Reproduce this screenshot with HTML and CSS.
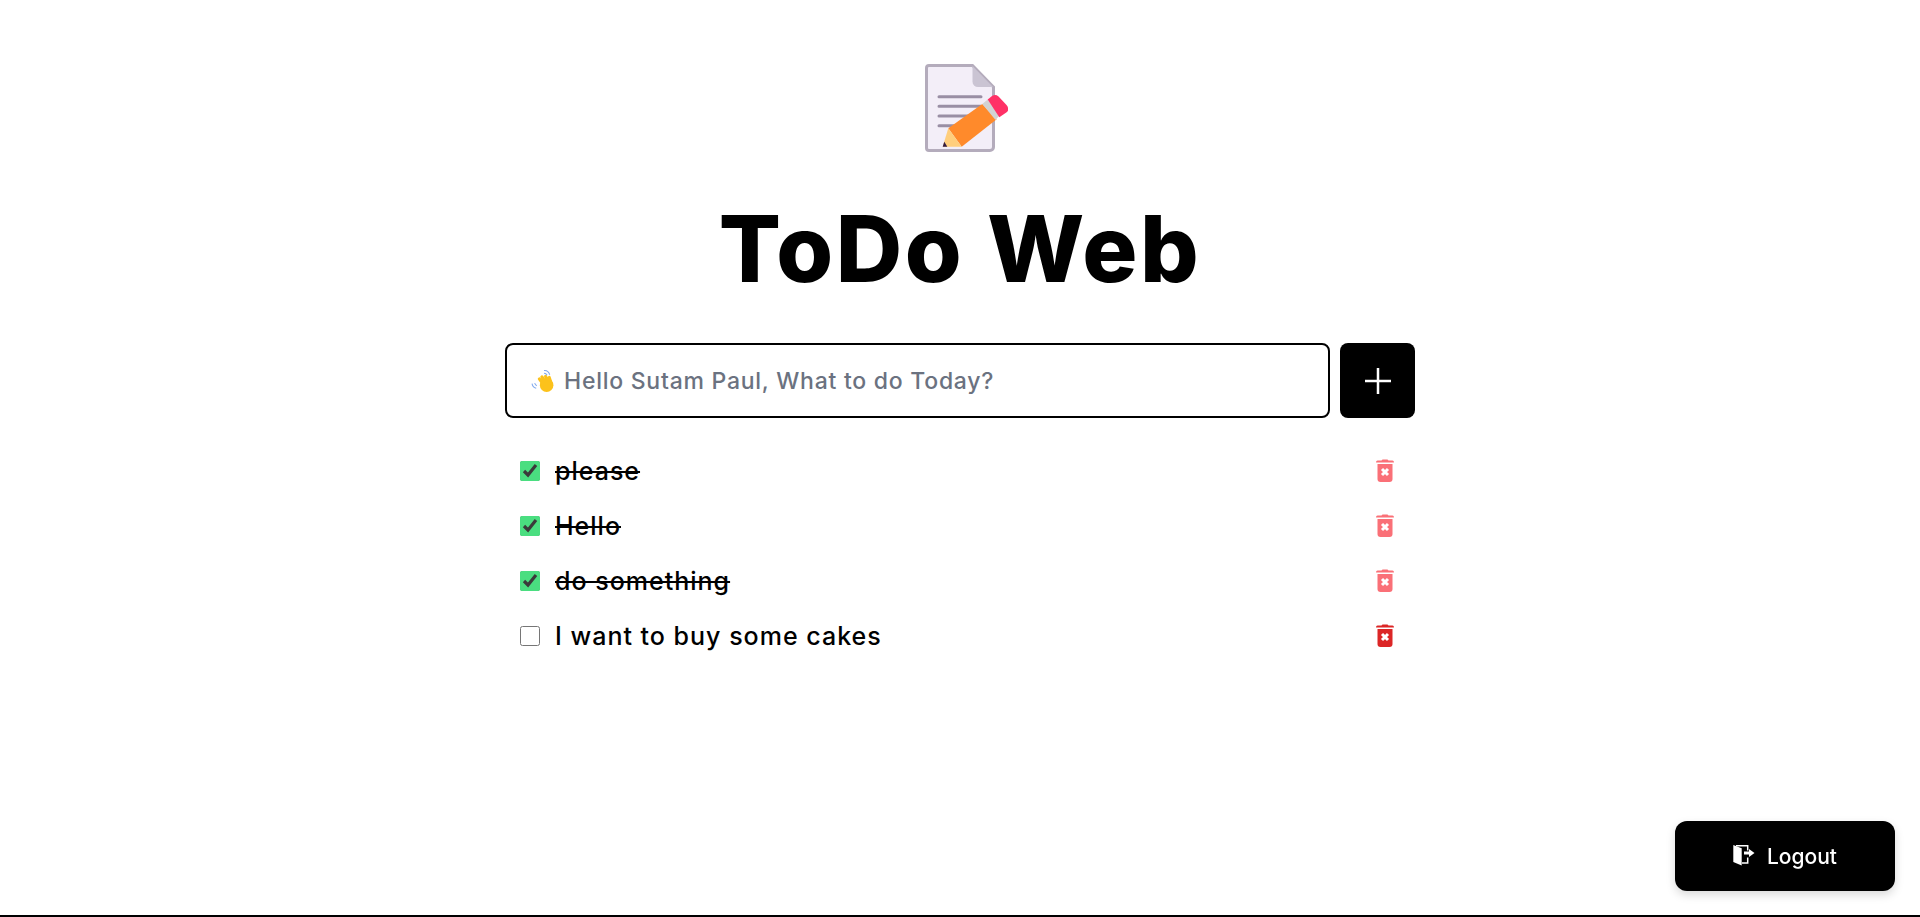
FILE: index.html
```html
<!DOCTYPE html>
<html lang="en">
<head>
  <meta charset="UTF-8">
  <meta name="viewport" content="width=device-width, initial-scale=1.0">
  <title>ToDo Web</title>
  <link rel="stylesheet" href="styles.css">
</head>
<body>
  <main class="page">
    <svg class="logo" viewBox="0 0 96 96" aria-hidden="true">
      <path d="M17 5.500H60.500L81.500 27V87A3.500 3.500 0 0 1 78 90.500H17A2.500 2.500 0 0 1 14.500 88V8A2.500 2.500 0 0 1 17 5.500Z" fill="#f3eef8" stroke="#b4acbc" stroke-width="3"/>
      <path d="M60.500 6L81 27H66A5.500 5.500 0 0 1 60.500 21.500Z" fill="#cac4d3"/>
      <path d="M27 36.700H69M27 46.300H69M27 56H62M27 65.700H45" stroke="#998ea4" stroke-width="3" stroke-linecap="round" fill="none"/>
      <path d="M36.300 68.300L70.300 44L84.700 59.300L49.700 86.700Z" fill="#ff8a2b"/>
      <path d="M36.300 68.300L49.700 86.700H30.700Z" fill="#ffce7c"/>
      <path d="M30.700 86.700H35.300L32.300 81.700Z" fill="#321b41"/>
      <path d="M70.300 44L75.700 39.500L87.300 55.700L83.500 60Z" fill="#d3d3d3"/>
      <path d="M75.700 39.500L80 36Q83.500 33.800 86.500 36.500L94.500 45Q97.800 49 95 52L87.300 57.300Z" fill="#ff3166"/>
    </svg>
    <h1 class="title">ToDo Web</h1>

    <form class="add-form">
      <label class="task-field">
        <svg class="wave" viewBox="0 0 24 24" aria-hidden="true">
          <circle cx="15" cy="16.500" r="6.500" fill="#fcc21b"/>
          <path d="M8 10.500L12 16M10.500 8.500L14.500 15M14 8L17 14.500M17.500 9L19.500 15" stroke="#fcc21b" stroke-width="3" stroke-linecap="round" fill="none"/>
          <path d="M1 15Q1.500 18.500 5 19.500M3.500 14.500Q4 16 5.500 17M12.500 2.500Q16.500 2 18 6.500M12.500 5Q14.500 5 15.500 7" stroke="#7fa8ee" stroke-width="1" fill="none"/>
        </svg>
        <input class="task-input" type="text" placeholder="Hello Sutam Paul, What to do Today?">
      </label>
      <button class="add-btn" type="button" aria-label="Add">
        <svg viewBox="0 0 26 26" width="26" height="26"><path d="M13 0V26M0 13H26" stroke="#fff" stroke-width="2.500"/></svg>
      </button>
    </form>

    <ul class="task-list">
      <li class="task done">
        <input type="checkbox" class="task-check" checked>
        <span class="task-text">please</span>
        <svg class="trash" viewBox="0 0 18 23"><use href="#trash-icon"/></svg>
      </li>
      <li class="task done">
        <input type="checkbox" class="task-check" checked>
        <span class="task-text">Hello</span>
        <svg class="trash" viewBox="0 0 18 23"><use href="#trash-icon"/></svg>
      </li>
      <li class="task done">
        <input type="checkbox" class="task-check" checked>
        <span class="task-text">do something</span>
        <svg class="trash" viewBox="0 0 18 23"><use href="#trash-icon"/></svg>
      </li>
      <li class="task">
        <input type="checkbox" class="task-check">
        <span class="task-text">I want to buy some cakes</span>
        <svg class="trash" viewBox="0 0 18 23"><use href="#trash-icon"/></svg>
      </li>
    </ul>
  </main>

  <button class="logout-btn" type="button">
    <svg viewBox="0 0 22 22" width="22" height="22" aria-hidden="true">
      <path d="M0.300 0L8.700 3.300V20.500L0.300 17Z" fill="#fff"/>
      <path d="M3 0.800H14.700V5.500M14.700 12.500V18H9" stroke="#fff" stroke-width="1.500" fill="none"/>
      <path d="M11 6.500H16V4L21.500 8L16 12V9.500H11Z" fill="#fff"/>
    </svg>
    <span>Logout</span>
  </button>

  <svg class="icon-defs" aria-hidden="true">
    <symbol id="trash-icon" viewBox="0 0 18 23">
      <path d="M6.500 0.500H11.500L12.500 1.500H16.500Q18 1.500 18 3.500H0Q0 1.500 1.500 1.500H5.500Z" fill="currentColor"/>
      <path d="M1.500 5H16.500V20A3 3 0 0 1 13.500 23H4.500A3 3 0 0 1 1.500 20Z" fill="currentColor"/>
      <path d="M6 10L12 16M12 10L6 16" stroke="#fff" stroke-width="3"/>
    </symbol>
  </svg>
</body>
</html>
```

FILE: styles.css
```css
* {
    box-sizing: border-box;
}

html, body {
    height: 100%;
}

body {
    margin: 0;
    background-color: #fff;
    color: #000;
    font-family: "Inter", "Open Sans", sans-serif;
    border-bottom: 2px solid #000;
}

.page {
    width: 910px;
    margin: 0 auto;
    padding-top: 60px;
    display: flex;
    flex-direction: column;
    align-items: stretch;
}

.logo {
    width: 96px;
    height: 96px;
    align-self: center;
}

.title {
    margin: 37px 0 0;
    height: 111px;
    line-height: 111px;
    font-size: 92px;
    font-weight: 800;
    letter-spacing: 2.5px;
    text-align: center;
}

.add-form {
    display: flex;
    gap: 10px;
    margin-top: 39px;
}

.task-field {
    flex: 1;
    height: 75px;
    display: flex;
    align-items: center;
    gap: 8px;
    padding: 0 24px;
    border: 2px solid #000;
    border-radius: 8px;
}

.wave {
    width: 25px;
    height: 25px;
    flex-shrink: 0;
}

.task-input {
    flex: 1;
    border: none;
    outline: none;
    padding: 0;
    font-family: inherit;
    font-size: 23px;
    font-weight: 500;
    letter-spacing: 0.75px;
}

.task-input::placeholder {
    color: #6b7280;
    opacity: 1;
}

.add-btn {
    width: 75px;
    height: 75px;
    display: flex;
    align-items: center;
    justify-content: center;
    padding: 0;
    border: none;
    border-radius: 8px;
    background-color: #000;
}

.task-list {
    list-style: none;
    margin: 25px 0 0;
    padding: 0 21px 0 15px;
}

.task {
    height: 55px;
    display: flex;
    align-items: center;
    gap: 15px;
}

.task-check {
    width: 20px;
    height: 20px;
    margin: 0;
    flex-shrink: 0;
    accent-color: #4ade80;
}

.task-text {
    flex: 1;
    font-size: 25px;
    font-weight: 500;
    letter-spacing: 1px;
}

.task.done .task-text {
    text-decoration: line-through;
}

.trash {
    width: 18px;
    height: 23px;
    color: #dc2626;
}

.task.done .trash {
    color: #fa7077;
}

.logout-btn {
    position: fixed;
    right: 25px;
    bottom: 26px;
    width: 220px;
    height: 70px;
    display: flex;
    align-items: center;
    justify-content: center;
    gap: 12px;
    border: none;
    border-radius: 12px;
    background-color: #000;
    color: #fff;
    font-family: inherit;
    font-size: 21px;
    font-weight: 500;
    box-shadow: 0 4px 10px rgba(0, 0, 0, 0.15);
}

.icon-defs {
    display: none;
}
```
